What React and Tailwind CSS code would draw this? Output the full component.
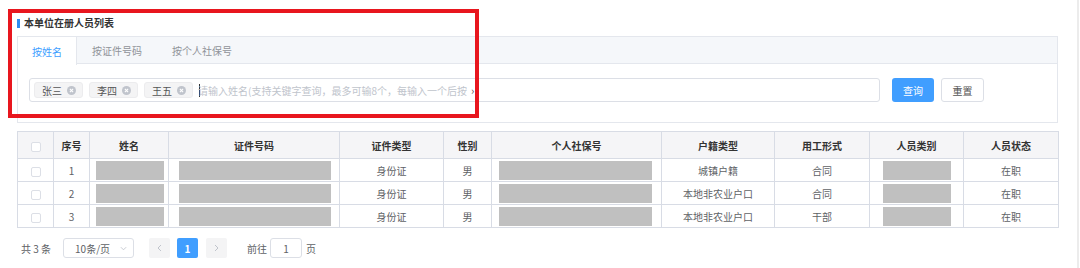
import React from "react";

const COLS = [36, 36, 79, 171, 104, 48, 170, 113, 95, 94, 95];
const HEAD = ["", "序号", "姓名", "证件号码", "证件类型", "性别", "个人社保号", "户籍类型", "用工形式", "人员类别", "人员状态"];
const ROWS = [
  { no: 1, hj: "城镇户籍", yg: "合同" },
  { no: 2, hj: "本地非农业户口", yg: "合同" },
  { no: 3, hj: "本地非农业户口", yg: "干部" },
];

function Box() {
  return <span className="inline-block w-[10px] h-[10px] border border-[#dcdfe6] rounded-[2px] bg-white align-middle" />;
}

function Mask({ cls }) {
  return <div className={"h-[19px] bg-[#c0c0c0] " + cls} />;
}

function Tag({ name }) {
  return (
    <span className="flex items-center h-[16px] pl-[7px] pr-[6px] gap-[5px] bg-[#f4f4f5] border border-[#ececee] rounded-[3px] text-[10px] text-[#555]">
      {name}
      <svg width="9" height="9" viewBox="0 0 10 10">
        <circle cx="5" cy="5" r="5" fill="#c0c4cc" />
        <path d="M3.2 3.2 L6.8 6.8 M6.8 3.2 L3.2 6.8" stroke="#fff" strokeWidth="1.2" />
      </svg>
    </span>
  );
}

export default function App() {
  return (
    <div
      className="relative w-[1080px] h-[268px] bg-white overflow-hidden"
      style={{ fontFamily: '"Noto Sans CJK SC", "Noto Sans", sans-serif' }}
    >
      <div className="w-[1058px] pl-[17px] pt-[18px]">
        {/* title */}
        <div className="flex items-center h-[10px] gap-[4px]">
          <span className="w-[3px] h-[9px] bg-[#2d8cf0]" />
          <span className="text-[10px] font-bold text-[#333] leading-none">本单位在册人员列表</span>
        </div>

        {/* search card */}
        <div className="mt-[8px] border border-[#e4e7ed]">
          <div className="flex h-[27px] bg-[#f5f7fa] border-b border-[#e4e7ed] text-[10px]">
            <div className="px-[14px] flex items-center bg-white text-[#409eff] border-r border-[#e4e7ed] h-[28px]">按姓名</div>
            <div className="px-[15px] flex items-center text-[#909399]">按证件号码</div>
            <div className="px-[15px] flex items-center text-[#909399]">按个人社保号</div>
          </div>
          <div className="flex items-center pl-[11px] pt-[14px] pb-[20px]">
            <div className="flex items-center w-[851px] h-[24px] border border-[#dcdfe6] rounded-[3px] pl-[4px] gap-[6px]">
              <Tag name="张三" />
              <Tag name="李四" />
              <Tag name="王五" />
              <span className="w-px h-[13px] bg-[#333]" />
              <span className="ml-[-8px] whitespace-nowrap text-[10px] text-[#c0c4cc]">
                请输入姓名(支持关键字查询，最多可输8个，每输入一个后按
              </span>
              <span className="ml-[-2px] text-[11px] text-[#555] leading-none">›</span>
            </div>
            <button className="ml-[12px] w-[42px] h-[24px] rounded-[3px] bg-[#409eff] text-white text-[10px]">查询</button>
            <button className="ml-[7px] w-[43px] h-[24px] rounded-[3px] border border-[#dcdfe6] bg-white text-[#555] text-[10px]">重置</button>
          </div>
        </div>

        {/* table */}
        <table className="mt-[8px] w-[1041px] table-fixed border-collapse text-[10px]">
          <colgroup>
            {COLS.map((w, i) => (
              <col key={i} style={{ width: w }} />
            ))}
          </colgroup>
          <thead>
            <tr className="h-[27px] bg-[#f5f5f7]">
              {HEAD.map((h, i) => (
                <th key={i} className="border border-[#d8dce5] font-bold text-[#333] text-center p-0">
                  {i === 0 ? <Box /> : h}
                </th>
              ))}
            </tr>
          </thead>
          <tbody>
            {ROWS.map((r) => (
              <tr key={r.no} className="h-[23px] text-[#606266]">
                <td className="border border-[#d8dce5] text-center p-0"><Box /></td>
                <td className="border border-[#d8dce5] text-center p-0">{r.no}</td>
                <td className="border border-[#d8dce5] p-0"><Mask cls="ml-[6px] mr-[4px]" /></td>
                <td className="border border-[#d8dce5] p-0"><Mask cls="ml-[10px] mr-[8px]" /></td>
                <td className="border border-[#d8dce5] text-center p-0">身份证</td>
                <td className="border border-[#d8dce5] text-center p-0">男</td>
                <td className="border border-[#d8dce5] p-0"><Mask cls="ml-[7px] mr-[9px]" /></td>
                <td className="border border-[#d8dce5] text-center p-0">{r.hj}</td>
                <td className="border border-[#d8dce5] text-center p-0">{r.yg}</td>
                <td className="border border-[#d8dce5] p-0"><Mask cls="ml-[13px] mr-[12px]" /></td>
                <td className="border border-[#d8dce5] text-center p-0">在职</td>
              </tr>
            ))}
          </tbody>
        </table>

        {/* pagination */}
        <div className="flex items-center mt-[10px] h-[20px] text-[10px] text-[#606266]">
          <span className="ml-[4px]">共 3 条</span>
          <div className="ml-[12px] w-[71px] h-[20px] border border-[#dcdfe6] rounded-[3px] flex items-center pl-[11px] pr-[6px] justify-between">
            <span>10条/页</span>
            <svg width="7" height="5" viewBox="0 0 8 5"><path d="M1 1 L4 4 L7 1" fill="none" stroke="#c0c4cc" strokeWidth="1" /></svg>
          </div>
          <div className="ml-[15px] w-[21px] h-[20px] bg-[#f4f4f5] rounded-[2px] flex items-center justify-center">
            <svg width="5" height="8" viewBox="0 0 5 8"><path d="M4 1 L1 4 L4 7" fill="none" stroke="#c0c4cc" strokeWidth="1" /></svg>
          </div>
          <div className="ml-[7px] w-[21px] h-[20px] bg-[#409eff] rounded-[2px] flex items-center justify-center text-white font-bold">1</div>
          <div className="ml-[8px] w-[21px] h-[20px] bg-[#f4f4f5] rounded-[2px] flex items-center justify-center">
            <svg width="5" height="8" viewBox="0 0 5 8"><path d="M1 1 L4 4 L1 7" fill="none" stroke="#c0c4cc" strokeWidth="1" /></svg>
          </div>
          <span className="ml-[20px]">前往</span>
          <div className="ml-[3px] w-[32px] h-[20px] border border-[#dcdfe6] rounded-[3px] flex items-center justify-center">1</div>
          <span className="ml-[4px]">页</span>
        </div>
      </div>

      {/* scrollbar edge */}
      <div className="absolute top-0 left-[1077px] w-[2px] h-[268px] bg-[#ececec]" />

      {/* red annotation box */}
      <div className="absolute left-[8px] top-[9px] w-[471px] h-[109px] border-4 border-[#e8161e]" />
    </div>
  );
}
